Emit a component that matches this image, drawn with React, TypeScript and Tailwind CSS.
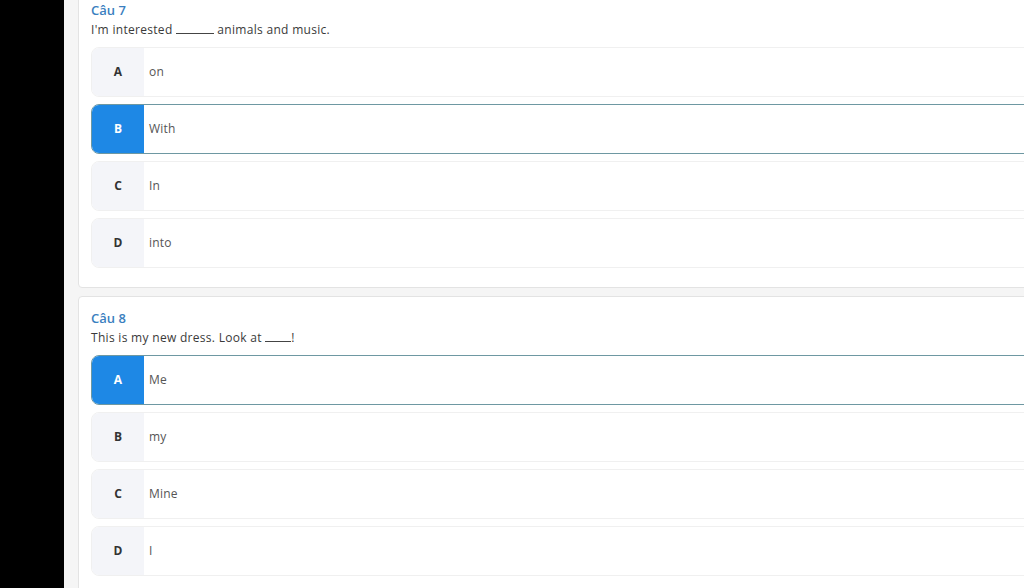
import React from 'react';

type Option = { key: string; text: string };

interface Question {
  title: string;
  prompt: React.ReactNode;
  options: Option[];
  selected: string;
}

const questions: Question[] = [
  {
    title: 'Câu 7',
    prompt: (
      <>
        I'm interested <span className="inline-block w-[38px] border-b border-[#444] align-baseline" /> animals and music.
      </>
    ),
    options: [
      { key: 'A', text: 'on' },
      { key: 'B', text: 'With' },
      { key: 'C', text: 'In' },
      { key: 'D', text: 'into' },
    ],
    selected: 'B',
  },
  {
    title: 'Câu 8',
    prompt: (
      <>
        This is my new dress. Look at <span className="inline-block w-[26px] border-b border-[#444] align-baseline" />!
      </>
    ),
    options: [
      { key: 'A', text: 'Me' },
      { key: 'B', text: 'my' },
      { key: 'C', text: 'Mine' },
      { key: 'D', text: 'I' },
    ],
    selected: 'A',
  },
];

function OptionRow({ option, active }: { option: Option; active: boolean }) {
  return (
    <div
      className={`flex h-[50px] items-stretch overflow-hidden rounded-lg bg-white ${
        active ? 'border border-[#6e98a2]' : 'border border-[#f0f0f0]'
      }`}
    >
      <div
        className={`flex w-[52px] shrink-0 items-center justify-center text-[12px] font-bold ${
          active ? 'bg-[#1e88e5] text-white' : 'bg-[#f4f5f9] text-[#333]'
        }`}
      >
        {option.key}
      </div>
      <div className="flex items-center pl-[5px] text-[12px] tracking-[0.2px] text-[#555]">{option.text}</div>
    </div>
  );
}

function QuestionCard({ q, first }: { q: Question; first?: boolean }) {
  return (
    <div
      className={`w-[1000px] shrink-0 rounded border border-[#e3e3e3] bg-white pl-[12px] pr-0 pt-[12px] pb-[19px] ${
        first ? '-mt-[12px]' : ''
      }`}
    >
      <div className="text-[13px] leading-[18px] font-semibold text-[#3b7fc0]">{q.title}</div>
      <div className="mt-[3px] text-[12px] leading-[16px] tracking-[0.3px] text-[#3a3a3a]">{q.prompt}</div>
      <div className="mt-[9px] flex flex-col gap-[7px]">
        {q.options.map((o) => (
          <OptionRow key={o.key} option={o} active={o.key === q.selected} />
        ))}
      </div>
    </div>
  );
}

export default function App() {
  return (
    <div
      className="flex h-[588px] w-[1024px] overflow-hidden bg-black"
      style={{ fontFamily: '"Open Sans", "Noto Sans", sans-serif' }}
    >
      <div className="w-[64px] shrink-0 bg-black" />
      <div className="flex flex-1 flex-col gap-[8px] overflow-hidden bg-[#f5f5f5] pl-[14px]">
        {questions.map((q, i) => (
          <QuestionCard key={q.title} q={q} first={i === 0} />
        ))}
      </div>
    </div>
  );
}
